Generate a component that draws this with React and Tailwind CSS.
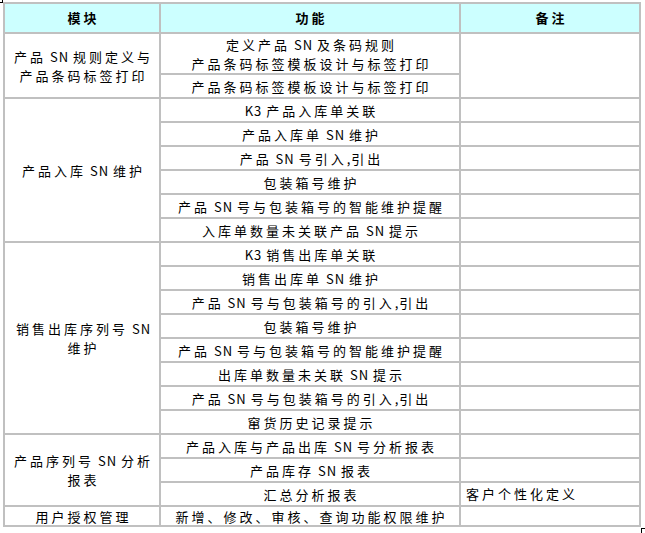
import React from "react";

const sections = [
  {
    mod: ["产品 SN 规则定义与", "产品条码标签打印"],
    rows: [["定义产品 SN 及条码规则", "产品条码标签模板设计与标签打印"], ["产品条码标签模板设计与标签打印"]],
    mergedNote: true,
  },
  {
    mod: ["产品入库 SN 维护"],
    rows: [
      ["K3 产品入库单关联"],
      ["产品入库单 SN 维护"],
      ["产品 SN 号引入,引出"],
      ["包装箱号维护"],
      ["产品 SN 号与包装箱号的智能维护提醒"],
      ["入库单数量未关联产品 SN 提示"],
    ],
  },
  {
    mod: ["销售出库序列号 SN", "维护"],
    rows: [
      ["K3 销售出库单关联"],
      ["销售出库单 SN 维护"],
      ["产品 SN 号与包装箱号的引入,引出"],
      ["包装箱号维护"],
      ["产品 SN 号与包装箱号的智能维护提醒"],
      ["出库单数量未关联 SN 提示"],
      ["产品 SN 号与包装箱号的引入,引出"],
      ["窜货历史记录提示"],
    ],
  },
  {
    mod: ["产品序列号 SN 分析", "报表"],
    rows: [["产品入库与产品出库 SN 号分析报表"], ["产品库存 SN 报表"], ["汇总分析报表"]],
    notes: ["", "", "客户个性化定义"],
  },
  {
    mod: ["用户授权管理"],
    rows: [["新增、修改、审核、查询功能权限维护"]],
  },
];

const rowSpanClass = {
  1: "row-span-1",
  2: "row-span-2",
  3: "row-span-3",
  6: "row-span-6",
  8: "row-span-8",
};

function T({ text }) {
  const parts = text.split(/([A-Za-z0-9 ,]+)/);
  return (
    <span className="whitespace-nowrap pl-[3px]">
      {parts.map((p, i) =>
        /^[A-Za-z0-9 ,]+$/.test(p) ? (
          <span key={i} className="tracking-[1px]">{p}</span>
        ) : (
          <React.Fragment key={i}>{p}</React.Fragment>
        )
      )}
    </span>
  );
}

export default function App() {
  const cells = [];
  let key = 0;
  sections.forEach((s) => {
    const n = s.rows.length;
    s.rows.forEach((r, ri) => {
      if (ri === 0) {
        cells.push(
          <div
            key={key++}
            className={`${rowSpanClass[n]} bg-white flex flex-col items-center justify-center text-center leading-[19px]`}
          >
            {s.mod.map((m, i) => (
              <T key={i} text={m} />
            ))}
          </div>
        );
      }
      cells.push(
        <div key={key++} className="bg-white flex flex-col items-center justify-center text-center leading-[19px]">
          {r.map((t, i) => (
            <T key={i} text={t} />
          ))}
        </div>
      );
      if (s.mergedNote) {
        if (ri === 0) {
          cells.push(<div key={key++} className={`${rowSpanClass[n]} bg-white`} />);
        }
      } else {
        const note = s.notes ? s.notes[ri] : "";
        cells.push(
          <div key={key++} className="bg-white flex items-center pl-[5px] whitespace-nowrap">
            {note}
          </div>
        );
      }
    });
  });

  return (
    <div className="relative w-[645px] h-[533px] bg-white text-black text-[13px] tracking-[3px] font-['Noto_Sans_CJK_SC','Noto_Sans',sans-serif]">
      <div className="absolute left-0 top-0 w-[3px] h-[3px] border-r border-b border-black" />
      <div className="pt-[2px] pl-[3px]">
        <div className="grid w-fit grid-cols-[154px_298px_178px] grid-rows-[28px_39px_repeat(18,22px)_18px] gap-[2px] p-[2px] bg-[#c0c0c0]">
          <div className="bg-[#ccffff] flex items-center justify-center font-bold pl-[3px]">模块</div>
          <div className="bg-[#ccffff] flex items-center justify-center font-bold pl-[3px]">功能</div>
          <div className="bg-[#ccffff] flex items-center justify-center font-bold pl-[3px]">备注</div>
          {cells}
        </div>
      </div>
      <div className="absolute left-[641px] top-[528px] w-[4px] h-[5px] border-l border-t border-black" />
    </div>
  );
}
